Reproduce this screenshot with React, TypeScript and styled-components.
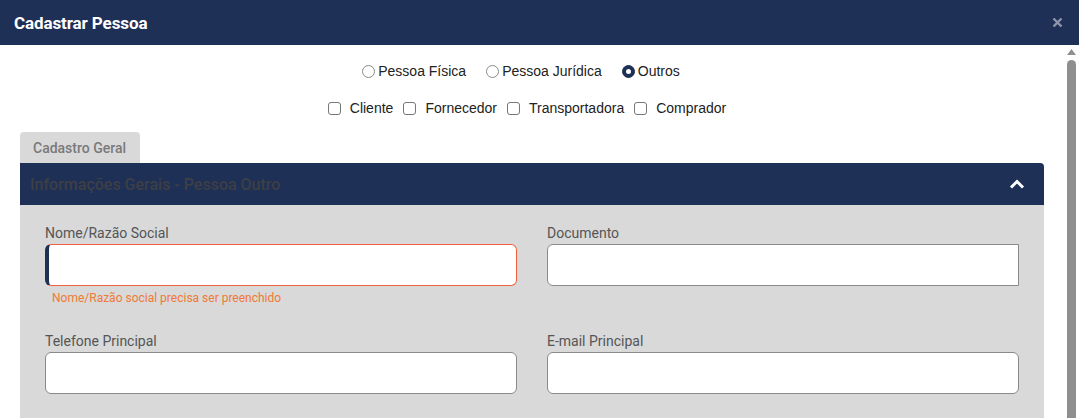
import React, { useState } from 'react';
import styled, { createGlobalStyle } from 'styled-components';

const GlobalStyle = createGlobalStyle`
  * { box-sizing: border-box; }
  html, body { margin: 0; padding: 0; background: #ffffff; overflow: hidden; }
  body { font-family: Roboto, "Liberation Sans", Arial, sans-serif; }
`;

const NAVY = '#1f3057';

const Modal = styled.div`
  width: 1079px;
  height: 418px;
  display: flex;
  flex-direction: column;
  background: #ffffff;
  overflow: hidden;
`;

const Header = styled.header`
  height: 45px;
  flex-shrink: 0;
  display: flex;
  align-items: center;
  justify-content: space-between;
  padding: 0 14px 0 14px;
  background: ${NAVY};
`;

const Title = styled.h1`
  margin: 0;
  font-size: 17px;
  font-weight: 700;
  color: #ffffff;
  letter-spacing: -0.1px;
`;

const Close = styled.button`
  border: none;
  background: transparent;
  padding: 0;
  width: 16px;
  height: 16px;
  display: flex;
  align-items: center;
  justify-content: center;
  cursor: pointer;
`;

const Main = styled.div`
  flex: 1;
  display: flex;
  min-height: 0;
`;

const Content = styled.div`
  flex: 1;
  padding: 0 20px;
  overflow: hidden;
`;

const Scrollbar = styled.div`
  width: 15px;
  flex-shrink: 0;
  display: flex;
  flex-direction: column;
  align-items: center;
  padding-top: 4px;
`;

const Thumb = styled.div`
  margin-top: 5px;
  width: 9px;
  flex: 1;
  background: #8f8f8f;
  border-radius: 5px 5px 0 0;
`;

const OptionRow = styled.div<{ $top: number; $gap: number; $shift: number }>`
  display: flex;
  justify-content: center;
  gap: ${(p) => p.$gap}px;
  margin-top: ${(p) => p.$top}px;
  padding-right: ${(p) => p.$shift}px;
  height: 20px;
  align-items: center;
  font-family: "Liberation Sans", Arial, sans-serif;
  font-size: 14px;
  color: #222222;
`;

const Option = styled.label<{ $space: number }>`
  display: flex;
  align-items: center;
  gap: ${(p) => p.$space}px;
  cursor: pointer;
`;

const Radio = styled.span<{ $checked?: boolean }>`
  width: 13px;
  height: 13px;
  border-radius: 50%;
  border: 1px solid ${(p) => (p.$checked ? NAVY : '#8a8a8a')};
  background: ${(p) => (p.$checked ? NAVY : '#ffffff')};
  display: flex;
  align-items: center;
  justify-content: center;

  &::after {
    content: '';
    display: ${(p) => (p.$checked ? 'block' : 'none')};
    width: 5px;
    height: 5px;
    border-radius: 50%;
    background: #ffffff;
  }
`;

const Check = styled.span`
  width: 13px;
  height: 13px;
  border-radius: 3px;
  border: 1px solid #767676;
  background: #ffffff;
`;

const Tabs = styled.div`
  margin-top: 14px;
  display: flex;
`;

const Tab = styled.div`
  height: 31px;
  padding: 0 14px 0 13px;
  display: flex;
  align-items: center;
  background: #d9d9d9;
  border-radius: 4px 4px 0 0;
  font-size: 14px;
  font-weight: 500;
  color: #7a7a7a;
`;

const Panel = styled.section`
  background: #d9d9d9;
  border-radius: 0 4px 0 0;
`;

const PanelHeader = styled.div`
  height: 42px;
  display: flex;
  align-items: center;
  justify-content: space-between;
  padding: 0 19px 0 10px;
  background: ${NAVY};
  border-radius: 0 4px 0 0;
`;

const PanelTitle = styled.span`
  font-size: 16px;
  font-weight: 500;
  color: #3d3f45;
`;

const PanelBody = styled.div`
  padding: 19px 25px 20px;
  display: grid;
  grid-template-columns: 1fr 1fr;
  column-gap: 30px;
  row-gap: 14px;
`;

const Field = styled.div`
  display: flex;
  flex-direction: column;
  min-height: 94px;
`;

const Label = styled.label`
  font-size: 14px;
  color: #555555;
  line-height: 18px;
  margin-bottom: 2px;
`;

const Input = styled.input<{ $error?: boolean; $squareRight?: boolean }>`
  height: 42px;
  width: 100%;
  background: #ffffff;
  border: 1px solid ${(p) => (p.$error ? '#f0603c' : '#8a8a8a')};
  border-left: ${(p) => (p.$error ? `4px solid ${NAVY}` : '1px solid #8a8a8a')};
  border-radius: ${(p) => (p.$squareRight ? '6px 0 0 6px' : '6px')};
  padding: 0 10px;
  font-size: 14px;
  outline: none;
`;

const ErrorMsg = styled.span`
  margin-top: 5px;
  padding-left: 7px;
  font-size: 12px;
  color: #f07a35;
`;

const tipos = ['Pessoa Física', 'Pessoa Jurídica', 'Outros'];
const papeis = ['Cliente', 'Fornecedor', 'Transportadora', 'Comprador'];

const App = () => {
  const [tipo, setTipo] = useState('Outros');

  return (
    <Modal>
      <GlobalStyle />
      <Header>
        <Title>Cadastrar Pessoa</Title>
        <Close aria-label="Fechar">
          <svg width="11" height="11" viewBox="0 0 11 11">
            <path d="M1.5 1.5 L9.5 9.5 M9.5 1.5 L1.5 9.5" stroke="#8d96ab" strokeWidth="2.4" strokeLinecap="butt" />
          </svg>
        </Close>
      </Header>
      <Main>
        <Content>
          <OptionRow $top={16} $gap={20} $shift={22}>
            {tipos.map((t) => (
              <Option key={t} $space={3} onClick={() => setTipo(t)}>
                <Radio $checked={tipo === t} />
                {t}
              </Option>
            ))}
          </OptionRow>
          <OptionRow $top={17} $gap={10} $shift={10}>
            {papeis.map((p) => (
              <Option key={p} $space={9}>
                <Check />
                {p}
              </Option>
            ))}
          </OptionRow>
          <Tabs>
            <Tab>Cadastro Geral</Tab>
          </Tabs>
          <Panel>
            <PanelHeader>
              <PanelTitle>Informações Gerais - Pessoa Outro</PanelTitle>
              <svg width="16" height="10" viewBox="0 0 16 10">
                <path d="M2 8.5 L8 2.5 L14 8.5" fill="none" stroke="#ffffff" strokeWidth="3" />
              </svg>
            </PanelHeader>
            <PanelBody>
              <Field>
                <Label>Nome/Razão Social</Label>
                <Input $error />
                <ErrorMsg>Nome/Razão social precisa ser preenchido</ErrorMsg>
              </Field>
              <Field>
                <Label>Documento</Label>
                <Input $squareRight />
              </Field>
              <Field>
                <Label>Telefone Principal</Label>
                <Input />
              </Field>
              <Field>
                <Label>E-mail Principal</Label>
                <Input />
              </Field>
            </PanelBody>
          </Panel>
        </Content>
        <Scrollbar>
          <svg width="9" height="6" viewBox="0 0 9 6">
            <path d="M4.5 0 L9 6 L0 6 Z" fill="#8f8f8f" />
          </svg>
          <Thumb />
        </Scrollbar>
      </Main>
    </Modal>
  );
};

export default App;
